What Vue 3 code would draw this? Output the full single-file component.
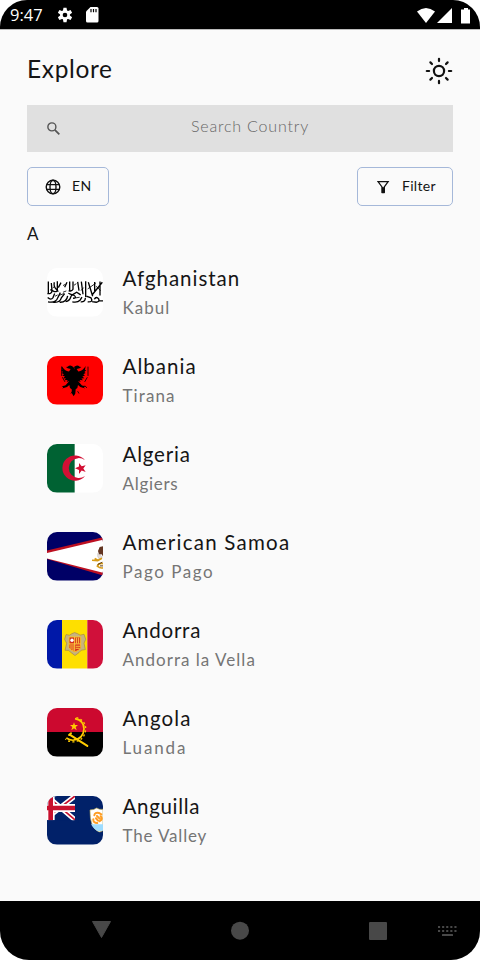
<script setup>
const countries = [
  { id: 'af', name: 'Afghanistan', capital: 'Kabul', ns: 0.96, cs: 1.05 },
  { id: 'al', name: 'Albania', capital: 'Tirana', ns: 1.05, cs: 1.1 },
  { id: 'dz', name: 'Algeria', capital: 'Algiers', ns: 0.8, cs: 0.7 },
  { id: 'as', name: 'American Samoa', capital: 'Pago Pago', ns: 1.25, cs: 1.55 },
  { id: 'ad', name: 'Andorra', capital: 'Andorra la Vella', ns: 0.75, cs: 1.02 },
  { id: 'ao', name: 'Angola', capital: 'Luanda', ns: 1.1, cs: 1.85 },
  { id: 'ai', name: 'Anguilla', capital: 'The Valley', ns: 0.68, cs: 0.83 },
]
const rays = [0, 45, 90, 135, 180, 225, 270, 315]
const teeth = [0, 60, 120, 180, 240, 300]
const keys = [0, 1, 2, 3, 4]
</script>

<template>
  <div class="phone">
    <header class="status">
      <span class="clock">9:47</span>
      <svg class="gear" viewBox="0 0 24 24" fill="#fff">
        <path fill-rule="evenodd" d="M12 4.5a7.5 7.5 0 1 0 0 15a7.5 7.5 0 1 0 0-15M12 8.5a3.5 3.5 0 1 1 0 7a3.5 3.5 0 1 1 0-7" />
        <path v-for="t in teeth" :key="t" d="M9.7 1h4.6l.9 5H8.8z" :transform="`rotate(${t} 12 12)`" />
      </svg>
      <svg class="sd" viewBox="0 0 13 16">
        <path fill="#fff" d="M4.5 0H11q1.500 0 1.500 1.500V14q0 1.500-1.500 1.500H1.500Q0 15.500 0 14V4.500z" />
        <path stroke="#000" stroke-width="1.200" d="M5 2v3.200M7.500 2v3.200M10 2v3.200" />
      </svg>
      <svg class="signals" viewBox="417 6 54 17" fill="#fff">
        <path d="M417 10.500Q426 3.500 435 10.500L426 22z" />
        <path d="M452 7v15h-15z" />
        <path d="M461 8.500h3V7h4v1.500h2V22.500h-9z" />
      </svg>
    </header>

    <main class="screen">
      <div class="heading">
        <h1>Explore</h1>
        <svg class="sun" viewBox="0 0 28 28" fill="none" stroke="#111" stroke-linecap="round">
          <circle cx="14" cy="14" r="5.100" stroke-width="2.200" />
          <path v-for="r in rays" :key="r" d="M14 1.800v2.300" stroke-width="2.200" :transform="`rotate(${r} 14 14)`" />
        </svg>
      </div>
      <div class="search">
        <svg viewBox="0 0 12 12" fill="none" stroke="#555">
          <circle cx="4.500" cy="4.500" r="3.700" stroke-width="1.300" />
          <path d="M7.200 7.200l4.200 4.200" stroke-width="1.600" />
        </svg>
        <span>Search Country</span>
      </div>
      <div class="actions">
        <button class="lang">
          <svg viewBox="0 0 16 16" fill="none" stroke="#111" stroke-width="1.400">
            <circle cx="8" cy="8" r="6.800" />
            <ellipse cx="8" cy="8" rx="3" ry="6.800" />
            <path d="M1.800 5.600h12.400M1.800 10.400h12.400" />
          </svg>
          <span>EN</span>
        </button>
        <button class="filter">
          <svg viewBox="0 0 14 14">
            <path fill="#111" fill-rule="evenodd" d="M.8 1h12.600L9 7V12.600q0 .7-.7.7H6q-.7 0-.7-.7V7zM3.300 2.300L7.100 7.600L10.900 2.300z" />
          </svg>
          <span>Filter</span>
        </button>
      </div>
      <h2>A</h2>
      <ul>
        <li v-for="c in countries" :key="c.id">
          <svg class="flag" viewBox="35 18 168 146" preserveAspectRatio="none">
            <g v-if="c.id === 'af'">
              <path fill="#fff" d="M35 18h168v146H35z" />
              <g transform="translate(0 -7)" fill="none" stroke="#000" stroke-width="4">
                <path d="M39 66v36M48 70l2 24q-1 10-14 8M57 68q-3 12 5 20l7 8M66 65v24q1 9-9 7l-12-6M77 69l-8 15M95 68l-7 15M103 66v27M113 66v23q-4 8-13 4M127 67l4 26M138 66l5 38M151 65v48M159 68l13 42M178 67v27M194 66v42M201 68l-29 36" />
                <path d="M38 127q24 4 29-12l8-16M54 128q20 2 24-13l10-13M73 128q21 1 24-19M91 126q12-2 15-13q4-12 12-4q7 7-5 7M111 127q16 3 23-5l6-9M37 114q10 9 16 0l5-12M99 101l12 5l13-8l12 8M136 127q14 1 14-12M157 127q18 1 10-12l-14-5M177 119q6-10 13-1q4 9-7 10l-13-2M192 124h11" />
                <path stroke-width="2.500" d="M52 85l7-5M83 78l7-4M116 77l7-5M157 88l24-17M72 107l14-5M121 115l12-2M182 80l14 13M83 98l10-4M145 84l-8 9M59 110l8-4" />
              </g>
            </g>
            <g v-else-if="c.id === 'al'">
              <path fill="red" d="M35 18h168v146H35z" />
              <path d="M119 59l-5-8q-9-9-17-1l-5 1l5 4l9 2l-5 8q-13-2-22-17l2 12l-4 1l6 5l-4 3l7 4l-5 4l8 3l-6 5l9 1l-5 5l10-1l-3 6l8-3l-12 14l-11 2l6 3l-5 4l15-5l7-6l2 9l5 4l1 13l5 8l5-8l1-13l5-4l2-9l7 6l15 5l-5-4l6-3l-11-2l-12-14l8 3l-3-6l10 1l-5-5l9-1l-6-5l8-3l-5-4l7-4l-4-3l6-5l-4-1l2-12q-9 15-22 17l-5-8l9-2l5-4l-5-1q-8-8-17 1z" />
              <path fill="none" stroke="#000" stroke-width="2.500" d="M79 50v28M158 50v28M81 82l8 14M156 82l-8 14M111 124l-4 7M127 124l4 7M90 107l-7 7M148 107l7 7" />
            </g>
            <g v-else-if="c.id === 'dz'">
              <path fill="#fff" d="M35 18h168v146H35z" /><path fill="#006233" d="M35 18h83v146H35z" />
              <path fill="#d21034" d="M149 67a38 38 0 1 0 0 47a30 30 0 1 1 0-47M119 91l12-5V75l8 10l12-3l-7 10l7 10l-12-4l-8 10V96z" />
            </g>
            <g v-else-if="c.id === 'as'">
              <path fill="#000066" d="M35 18h168v146H35z" /><path fill="#bd1021" d="M35 74L203 34v115L35 99z" /><path fill="#fff" d="M35 81L203 41v100L35 98z" />
              <path fill="#633521" d="M203 61l-10 2l-5 12l3 11l8-1l4 7z" /><path fill="#e9ddd5" stroke="#999" d="M187 83l8 5l6 6l-10 5l-4-8z" /><path fill="none" stroke="#d89c17" stroke-width="5" d="M170 103l17 1l13-7M178 98l11 6M203 113q-14-2-17 8q8 7 17 5" /><path stroke="#553718" stroke-width="3" d="M187 116l14-7M194 120h9" />
            </g>
            <g v-else-if="c.id === 'ad'">
              <path fill="#0018a8" d="M35 18h45v146H35z" /><path fill="#fedf00" d="M80 18h76v146H80z" /><path fill="#d0103a" d="M156 18h47v146h-47z" />
              <path fill="#c7b37f" stroke="#a38642" stroke-width="2" d="M92 62q12 5 18-3l8-3l8 3q7 8 20 2l5 15l-5 12l4 19q-14-1-19 9l-12 9l-12-9q-5-9-18-7l5-21l-6-12z" />
              <path fill="#d52b1e" stroke="#f5c52e" stroke-width="3" d="M101 69h35v32q-1 8-17 13q-17-5-18-13z" />
              <path stroke="#fed141" stroke-width="3" d="M118 69v42M101 90h35M107 92v15M113 92v19M124 71v18M130 71v18M121 97h13M121 103h12" /><circle cx="110" cy="79" r="5" fill="#fff" />
            </g>
            <g v-else-if="c.id === 'ao'">
              <path fill="#cc092f" d="M35 18h168v73H35z" /><path d="M35 90h168v74H35z" />
              <path fill="#ffcb00" d="M116 61l3 8h9l-7 6l3 10l-8-6l-8 6l3-10l-7-6h9z" />
              <path fill="none" stroke="#ffcb00" stroke-width="5" d="M119 50q27 5 27 31q-2 31-33 34q-11 0-20-7" />
              <path fill="none" stroke="#ffcb00" stroke-width="4" stroke-dasharray="6 7" d="M123 47q29 9 28 35q-3 35-37 38q-14 0-24-9" />
              <path stroke="#ffcb00" stroke-width="6" stroke-linecap="round" d="M103 98l53 34M101 99l6-5" />
            </g>
            <g v-else>
              <path fill="#012169" d="M35 18h168v146H35z" />
              <path stroke="#fff" stroke-width="15" d="M35 84l84-66M35 18l84 72" /><path stroke="#c8102e" stroke-width="5" d="M35 84l84-66M35 18l84 72" />
              <path stroke="#fff" stroke-width="24" d="M46 18v73M35 54h84" /><path stroke="#c8102e" stroke-width="14" d="M46 18v73M35 54h84" />
              <path fill="#012169" d="M35 91h90v20H35zM119 18h10v80h-10z" />
              <path fill="#fff" stroke="#b7a754" stroke-width="2" d="M164 60q12 0 20-6q8 6 19 4v64q-8 5-12 4q-28-12-27-66z" /><path fill="#9ddcff" d="M167 103h36v19l-13 2q-14-5-23-21z" />
              <path fill="none" stroke="#ff9e24" stroke-width="6" stroke-linecap="round" d="M177 76q1-10 14-7l7 4M196 79q8 9-3 15M174 88q-1 11 12 11M185 78l8 8M182 85l6 7" />
            </g>
          </svg>
          <div class="copy">
            <strong :style="{ letterSpacing: c.ns + 'px' }">{{ c.name }}</strong>
            <span :style="{ letterSpacing: c.cs + 'px' }">{{ c.capital }}</span>
          </div>
        </li>
      </ul>
    </main>

    <nav>
      <svg viewBox="0 901 480 59" fill="#484848">
        <path stroke="#484848" stroke-linejoin="round" d="M92.500 921.500h18l-9 16z" />
        <circle cx="240" cy="930.700" r="9" />
        <rect x="369" y="922" width="18" height="18" rx="1" />
        <g v-for="k in keys" :key="k">
          <rect :x="438 + k * 4.1" y="926" width="2.100" height="2" />
          <rect :x="438 + k * 4.1" y="930" width="2.100" height="2" />
        </g>
        <rect x="442" y="934" width="11" height="2" rx=".5" />
      </svg>
    </nav>
  </div>
</template>

<style>
body { margin: 0; background: #fff; }
</style>
<style scoped>
* { box-sizing: border-box; }
.phone { width: 480px; height: 960px; overflow: hidden; display: flex; flex-direction: column; background: #fafafa; font-family: Lato, sans-serif; color: #151515; border-radius: 27px 27px 29px 29px; }
.status { height: 29px; display: flex; align-items: center; background: #000; color: #fff; padding: 1px 9px 0 10px; }
.clock { font: 16.500px/24px "Open Sans", sans-serif; width: 47px; }
.gear { width: 16px; height: 16px; }
.sd { width: 13px; height: 16px; margin-left: 13px; }
.signals { width: 54px; height: 17px; margin-left: auto; }
.screen { height: 872px; padding: 20px 27px 0; border-top: 1px solid #bbb; }
.heading { height: 40px; display: flex; justify-content: space-between; align-items: flex-start; }
h1 { margin: 0; font-size: 24.500px; line-height: 37px; font-weight: 400; letter-spacing: .65px; }
.sun { width: 28px; height: 28px; margin-top: 7px; }
.search { height: 47px; margin-top: 15px; background: #e0e0e0; display: flex; align-items: center; padding-left: 20px; color: #666; }
.search svg { width: 13px; height: 13px; }
.search span { width: 373px; text-align: center; padding-left: 7px; font-size: 16px; line-height: 20px; font-weight: 300; letter-spacing: .8px; margin-top: -6px; }
.actions { display: flex; justify-content: space-between; margin-top: 15px; }
button { height: 39px; display: flex; align-items: center; border: 1px solid #a5b8d9; border-radius: 5px; background: transparent; padding: 0 0 0 17px; color: #151515; font: 14px/20px Lato, sans-serif; letter-spacing: .3px; }
.lang { width: 82px; }
.filter { width: 96px; padding-left: 18px; }
button svg { width: 16px; height: 16px; margin-right: 11px; }
.filter svg { width: 14px; height: 14px; margin-right: 12px; }
button span { margin-top: -2px; }
h2 { margin: 17px 0 0; font-size: 17px; line-height: 22px; font-weight: 400; }
ul { list-style: none; margin: 0; padding: 10px 0 0 19.500px; }
li { height: 88px; display: flex; align-items: flex-start; padding-top: 13px; }
.flag { width: 56px; height: 48.500px; border-radius: 10px; flex: none; }
.copy { display: flex; flex-direction: column; margin: -4px 0 0 20px; white-space: nowrap; }
.copy strong { font-size: 20.500px; font-weight: 400; line-height: 29px; }
.copy span { color: #757575; font-size: 17px; line-height: 29px; }
nav { height: 59px; background: #000; }
nav svg { display: block; width: 480px; height: 59px; }
</style>
